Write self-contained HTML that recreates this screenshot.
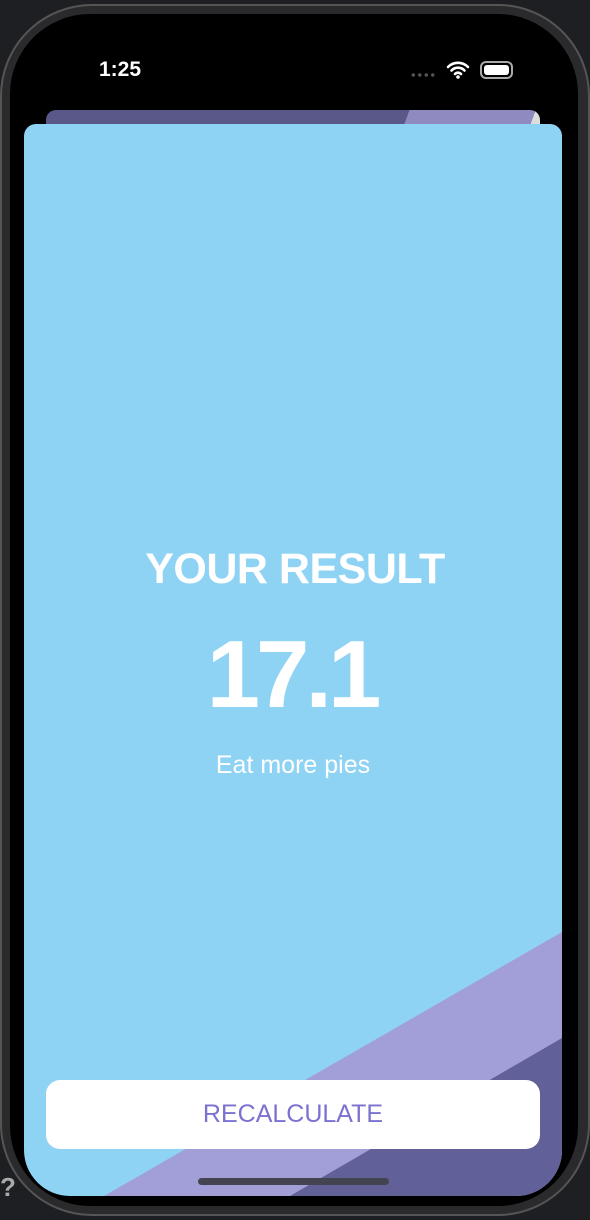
<!DOCTYPE html>
<html><head><style>
*{margin:0;padding:0;box-sizing:border-box}
body{width:590px;height:1220px;background:#1e1f22;overflow:hidden;position:relative;font-family:"Liberation Sans",sans-serif}
.phone{position:absolute;left:0;top:4px;width:590px;height:1212px;border-radius:92px;background:#2a2a2c;border:2px solid #555}
.screen{position:absolute;left:10px;top:14px;width:568px;height:1192px;border-radius:80px;background:#000}
.t{position:absolute;color:#fff}
.back{position:absolute;left:46px;top:110px;width:494px;height:30px;border-radius:10px;background:linear-gradient(110deg,#5a5889 0,#5a5889 72%,#8f8bc0 72%,#8f8bc0 97%,#ddd 97%)}
.card{position:absolute;left:24px;top:124px;width:538px;height:1072px;background:#8fd3f4;border-radius:12px 12px 46px 46px;overflow:hidden}
.btn{position:absolute;left:46px;top:1080px;width:494px;height:69px;background:#fff;border-radius:14px;color:#7b72d0;font-size:25px;text-align:center;line-height:69px}
</style></head><body>
<div class="phone"></div>
<div class="screen"></div>
<div class="t" style="left:99px;top:58px;font-size:21px;font-weight:bold">1:25</div>
<div style="position:absolute;left:410px;top:73px;width:26px;height:4px;background:radial-gradient(circle,#555 1.5px,transparent 2px) 0 0/6.5px 4px"></div>
<svg style="position:absolute;left:446px;top:61px" width="24" height="18" viewBox="0 0 24 18"><path d="M2 6a14 14 0 0 1 20 0M5.5 9.5a9 9 0 0 1 13 0M9 13a4 4 0 0 1 6 0" stroke="#fff" stroke-width="2.6" fill="none" stroke-linecap="round"/><circle cx="12" cy="16" r="1.8" fill="#fff"/></svg>
<div style="position:absolute;left:480px;top:61px;width:33px;height:18px;border:2px solid #aaa;border-radius:6px;padding:2px"><div style="background:#fff;width:100%;height:100%;border-radius:3px"></div></div>
<div class="back"></div>
<div class="card">
<svg width="538" height="1072" style="position:absolute;left:0;top:0"><polygon points="80,1072 538,808 538,1072" fill="#a29fd8"/><polygon points="266,1072 538,914 538,1072" fill="#626098"/></svg>
</div>
<div class="t" style="left:0;width:590px;text-align:center;top:545px;font-size:43px;font-weight:bold;letter-spacing:-0.5px">YOUR RESULT</div>
<div class="t" style="left:0;width:584px;text-align:center;top:620px;font-size:96px;font-weight:bold;letter-spacing:-4px">17.1</div>
<div class="t" style="left:0;width:586px;text-align:center;top:751px;font-size:25px">Eat more pies</div>
<div class="btn">RECALCULATE</div>
<div style="position:absolute;left:198px;top:1178px;width:191px;height:7px;border-radius:4px;background:#444450"></div>
<div style="position:absolute;left:0;top:1172px;color:#aaa;font-weight:bold;font-size:26px">?</div>
</body></html>
